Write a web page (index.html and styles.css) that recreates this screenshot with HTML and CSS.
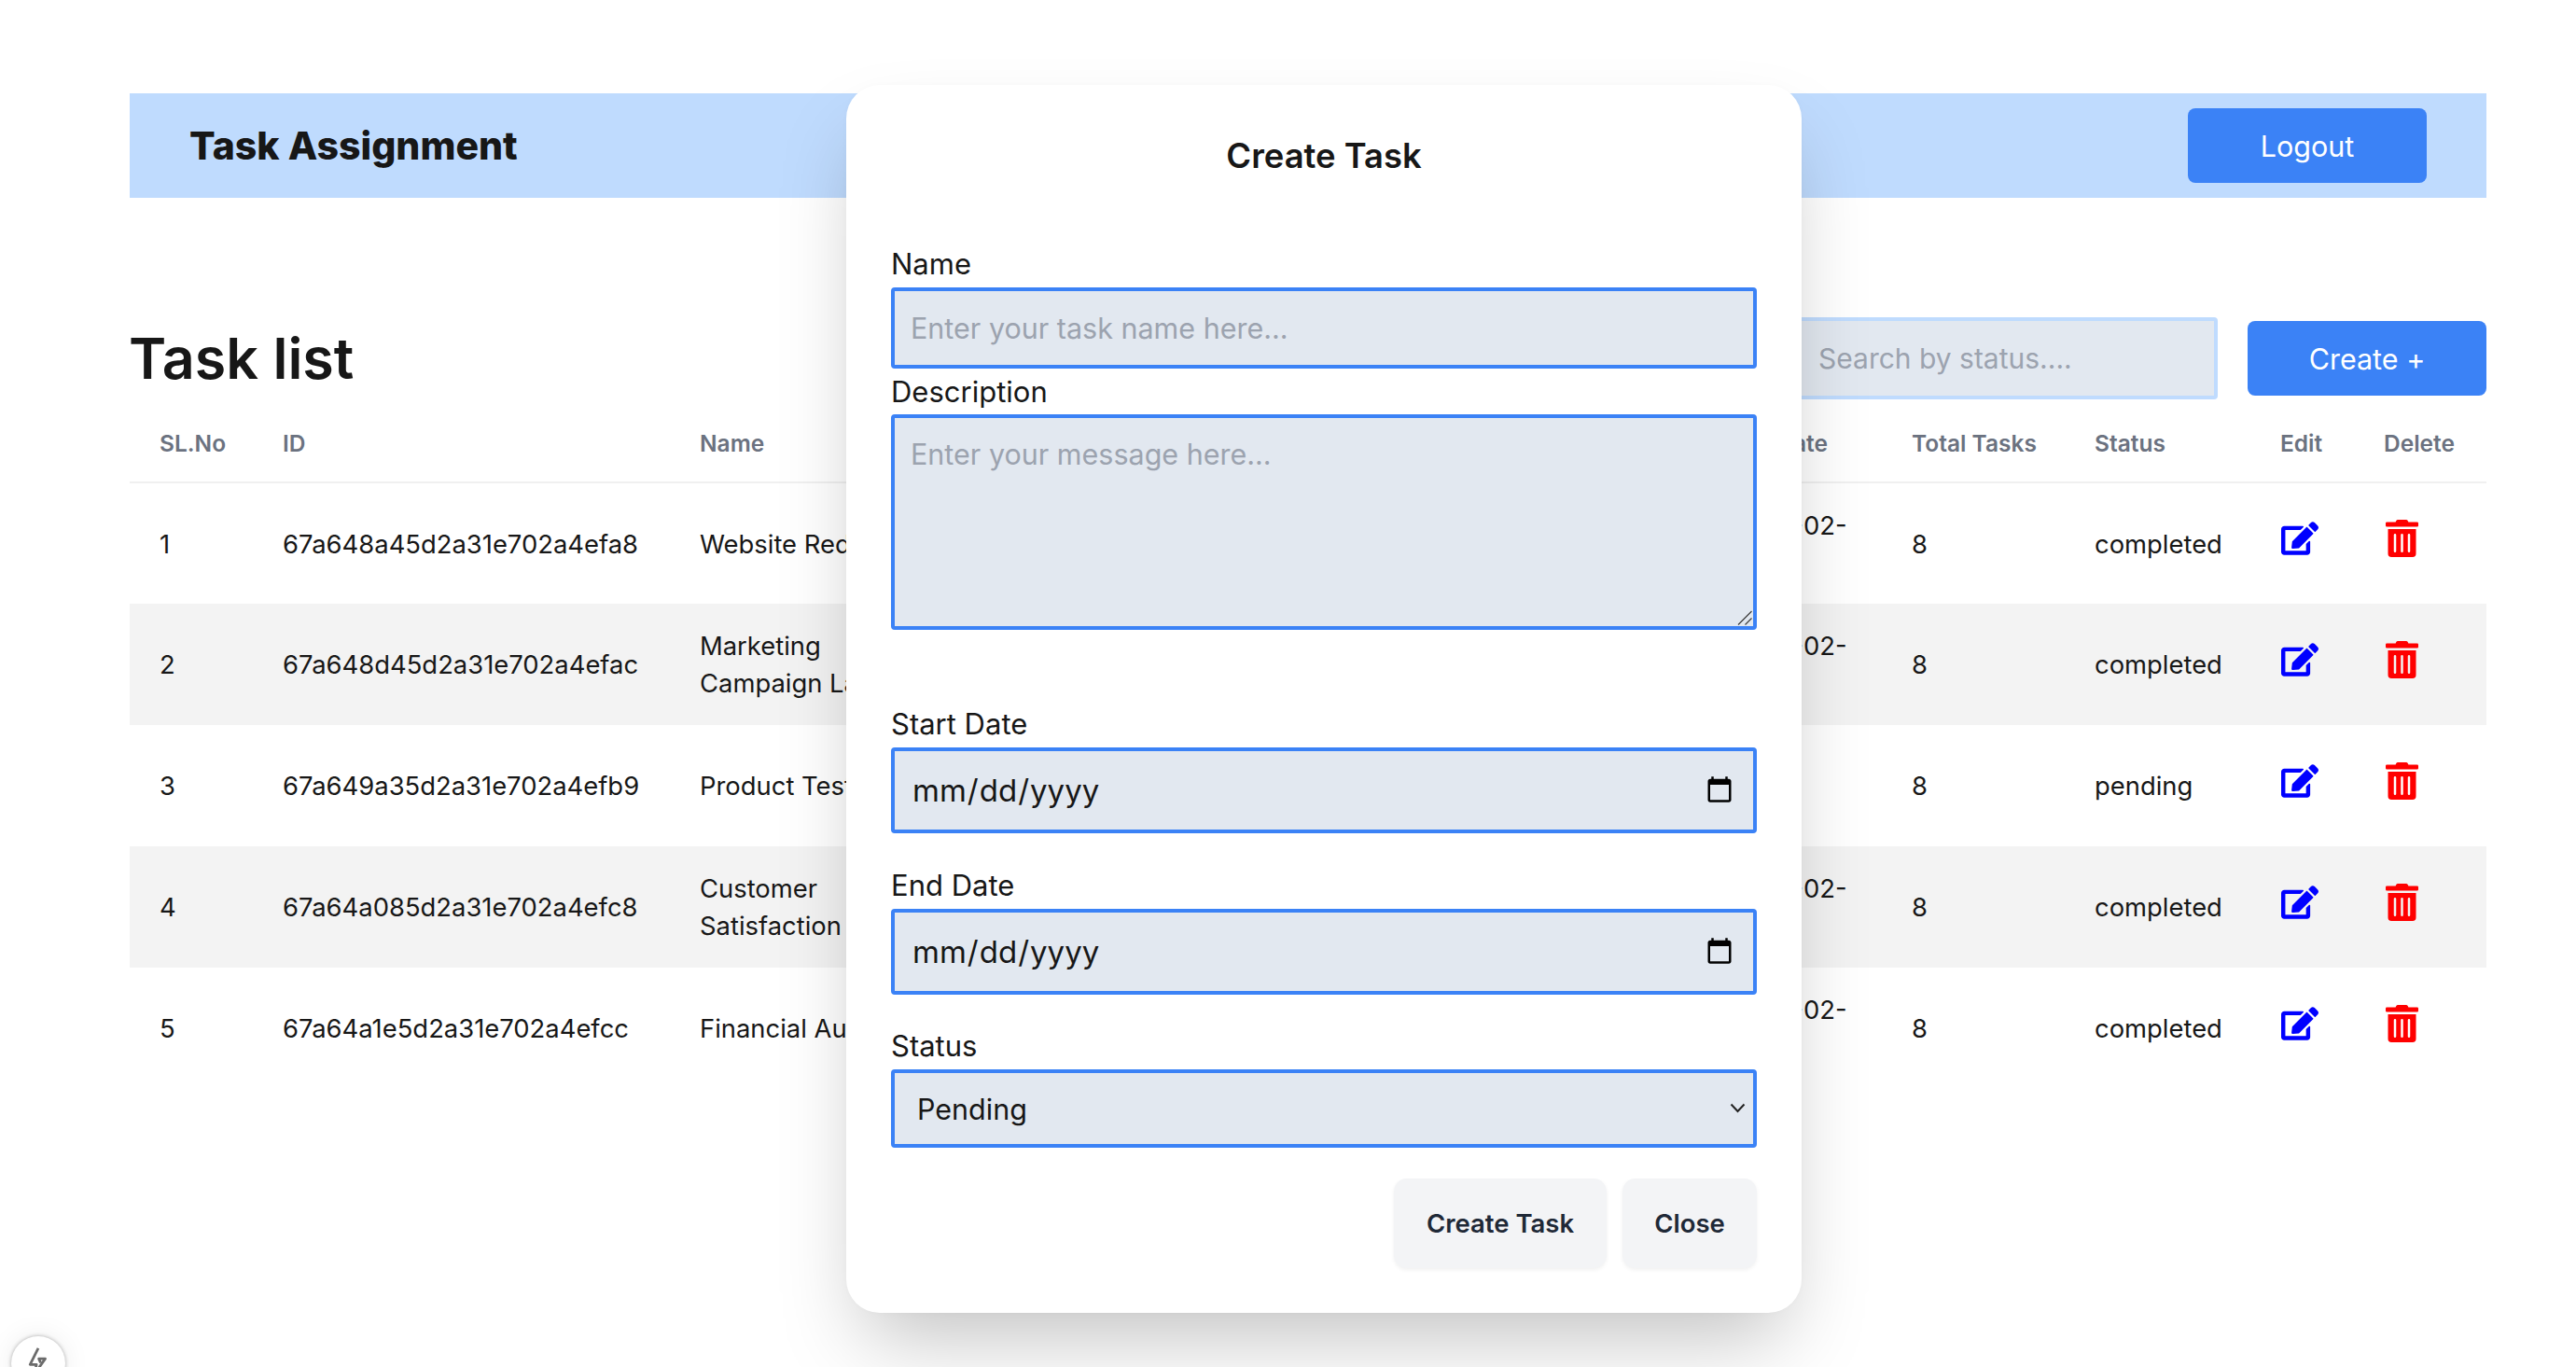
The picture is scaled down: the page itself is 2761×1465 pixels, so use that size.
FILE: index.html
```html
<!DOCTYPE html>
<html lang="en">
<head>
  <meta charset="utf-8">
  <title>Task Assignment</title>
  <link rel="stylesheet" href="styles.css">
</head>
<body>
  <section class="page">
    <header class="topbar">
      <h2 class="brand">Task Assignment</h2>
      <button class="btn-blue" type="button">Logout</button>
    </header>

    <div class="list-head">
      <h1 class="list-title">Task list</h1>
      <div class="list-tools">
        <input class="search" type="text" placeholder="Search by status....">
        <button class="btn-blue" type="button">Create +</button>
      </div>
    </div>

    <table class="tasks">
      <colgroup>
        <col class="c-sl"><col class="c-id"><col class="c-name"><col class="c-desc">
        <col class="c-start"><col class="c-end"><col class="c-total"><col class="c-status">
        <col class="c-edit"><col class="c-del">
      </colgroup>
      <thead>
        <tr>
          <th>SL.No</th><th>ID</th><th>Name</th><th>Description</th><th>Start Date</th>
          <th>End Date</th><th>Total Tasks</th><th>Status</th><th>Edit</th><th>Delete</th>
        </tr>
      </thead>
      <tbody>
        <tr>
          <td>1</td><td>67a648a45d2a31e702a4efa8</td><td>Website Redesign</td><td>Redesign the company website</td>
          <td>2025-02-01</td><td>2025-02-<br>20</td><td>8</td><td>completed</td>
          <td><svg class="ico-edit" viewBox="0 0 576 512"><use href="#edit"/></svg></td>
          <td><svg class="ico-del" viewBox="0 0 448 512"><use href="#trash"/></svg></td>
        </tr>
        <tr>
          <td>2</td><td>67a648d45d2a31e702a4efac</td><td>Marketing Campaign Launch</td><td>Plan the spring campaign</td>
          <td>2025-02-03</td><td>2025-02-<br>25</td><td>8</td><td>completed</td>
          <td><svg class="ico-edit" viewBox="0 0 576 512"><use href="#edit"/></svg></td>
          <td><svg class="ico-del" viewBox="0 0 448 512"><use href="#trash"/></svg></td>
        </tr>
        <tr>
          <td>3</td><td>67a649a35d2a31e702a4efb9</td><td>Product Testing</td><td>Test the new product</td>
          <td>2025-02-05</td><td>2025</td><td>8</td><td>pending</td>
          <td><svg class="ico-edit" viewBox="0 0 576 512"><use href="#edit"/></svg></td>
          <td><svg class="ico-del" viewBox="0 0 448 512"><use href="#trash"/></svg></td>
        </tr>
        <tr>
          <td>4</td><td>67a64a085d2a31e702a4efc8</td><td>Customer Satisfaction Survey</td><td>Collect customer feedback</td>
          <td>2025-02-07</td><td>2025-02-<br>22</td><td>8</td><td>completed</td>
          <td><svg class="ico-edit" viewBox="0 0 576 512"><use href="#edit"/></svg></td>
          <td><svg class="ico-del" viewBox="0 0 448 512"><use href="#trash"/></svg></td>
        </tr>
        <tr>
          <td>5</td><td>67a64a1e5d2a31e702a4efcc</td><td>Financial Audit</td><td>Review the yearly accounts</td>
          <td>2025-02-09</td><td>2025-02-<br>28</td><td>8</td><td>completed</td>
          <td><svg class="ico-edit" viewBox="0 0 576 512"><use href="#edit"/></svg></td>
          <td><svg class="ico-del" viewBox="0 0 448 512"><use href="#trash"/></svg></td>
        </tr>
      </tbody>
    </table>
  </section>

  <!-- modal sits over the page -->
  <section class="modal">
    <h3 class="modal-title">Create Task</h3>
    <form class="modal-form">
      <label class="lbl">Name</label>
      <input class="fld fld-name" type="text" placeholder="Enter your task name here...">
      <label class="lbl lbl-desc">Description</label>
      <div class="wrap">
        <textarea class="fld fld-desc" placeholder="Enter your message here..."></textarea>
        <svg class="grip" viewBox="0 0 16 16"><path d="M15.5 1 1 15.5M15.5 8.5 8.5 15.5" fill="none" stroke="#3d3d3d" stroke-width="1.2"/></svg>
      </div>
      <label class="lbl lbl-start">Start Date</label>
      <input class="fld fld-date" type="date">
      <label class="lbl lbl-end">End Date</label>
      <input class="fld fld-date" type="date">
      <label class="lbl lbl-status">Status</label>
      <div class="wrap">
        <select class="fld fld-select">
          <option>Pending</option>
          <option>Completed</option>
        </select>
        <svg class="chev" viewBox="0 0 17 11"><path d="M1.5 1.5 8.5 9l7-7.5" fill="none" stroke="#222" stroke-width="2"/></svg>
      </div>
      <div class="modal-actions">
        <button class="btn-gray btn-create" type="button">Create Task</button>
        <button class="btn-gray btn-close" type="button">Close</button>
      </div>
    </form>
  </section>

  <div class="bolt">
    <svg viewBox="0 0 24 24" width="30" height="30"><path d="M12 1.5 5 15.5h5.5L8.5 24l9.5-13.5h-5.5l1.5 3.5" fill="none" stroke="#6b6b6b" stroke-width="2.2" stroke-linejoin="round"/></svg>
  </div>

  <svg class="defs" width="0" height="0">
    <defs>
      <path id="edit" d="M402.6 83.2l90.2 90.2c3.8 3.8 3.8 10 0 13.8L274.4 405.6l-92.8 10.3c-12.4 1.4-22.9-9.1-21.5-21.5l10.3-92.8L388.8 83.2c3.8-3.8 10-3.8 13.8 0zm162-22.9l-48.8-48.8c-15.2-15.2-39.9-15.2-55.2 0l-35.4 35.4c-3.8 3.8-3.8 10 0 13.8l90.2 90.2c3.8 3.8 10 3.8 13.8 0l35.4-35.4c15.2-15.3 15.2-40 0-55.2zM384 346.2V448H64V128h229.8c3.2 0 6.2-1.3 8.5-3.5l40-40c7.6-7.6 2.2-20.5-8.5-20.5H48C21.5 64 0 85.5 0 112v352c0 26.5 21.5 48 48 48h352c26.5 0 48-21.5 48-48V306.2c0-10.7-12.9-16-20.5-8.5l-40 40c-2.2 2.3-3.5 5.3-3.5 8.5z"/>
      <path id="trash" d="M32 464a48 48 0 0 0 48 48h288a48 48 0 0 0 48-48V128H32zm272-256a16 16 0 0 1 32 0v224a16 16 0 0 1-32 0zm-96 0a16 16 0 0 1 32 0v224a16 16 0 0 1-32 0zm-96 0a16 16 0 0 1 32 0v224a16 16 0 0 1-32 0zM432 32H312l-9.4-18.7A24 24 0 0 0 281.1 0H166.8a23.72 23.72 0 0 0-21.4 13.3L136 32H16A16 16 0 0 0 0 48v32a16 16 0 0 0 16 16h416a16 16 0 0 0 16-16V48a16 16 0 0 0-16-16z"/>
    </defs>
  </svg>
</body>
</html>
```

FILE: styles.css
```css
* {
    box-sizing: border-box;
}

html, body {
    margin: 0;
    height: 100%;
    overflow: hidden;
}

body {
    font-family: Inter, "Liberation Sans", sans-serif;
    color: #171717;
    background: white;
}

/* page behind the modal */
.page {
    padding: 100px 96px 0 139px;
}

.topbar {
    display: flex;
    justify-content: space-between;
    align-items: center;
    height: 112px;
    padding: 0 64px;
    background: #bfdbfe;
}

.brand {
    margin: 0;
    font-size: 41px;
    font-weight: 800;
}

.btn-blue {
    width: 256px;
    height: 80px;
    border: 0;
    border-radius: 8px;
    background: #3b82f6;
    color: white;
    font: 400 30.5px Inter, sans-serif;
}

.list-head {
    display: flex;
    justify-content: space-between;
    align-items: center;
    margin-top: 128px;
    height: 88px;
}

.list-title {
    margin: 0 0 0 -1px;
    font-size: 61px;
    font-weight: 600;
}

.list-tools {
    display: flex;
    align-items: center;
    gap: 32px;
}

.search {
    width: 450px;
    height: 88px;
    padding: 0 0 0 18px;
    border: 4px solid #bfdbfe;
    border-radius: 4px;
    background: #e2e8f0;
    font: 400 30px Inter, sans-serif;
}

.search::placeholder,
.fld::placeholder {
    color: #9ca3af;
    opacity: 1;
}

/* table */
.tasks {
    width: 100%;
    border-collapse: collapse;
    table-layout: fixed;
    font-size: 27.4px;
    line-height: 40px;
}

.c-sl { width: 132px; }
.c-id { width: 447px; }
.c-name { width: 292px; }
.c-desc { width: 610px; }
.c-start { width: 201px; }
.c-end { width: 196px; }
.c-total { width: 196px; }
.c-status { width: 199px; }
.c-edit { width: 111px; }
.c-del { width: 142px; }

.tasks th {
    height: 89px;
    padding: 6px 0 0 32px;
    border-bottom: 2px solid #f0f0f0;
    text-align: left;
    font-size: 24.5px;
    font-weight: 600;
    color: #6b7280;
    white-space: nowrap;
}

.tasks td {
    height: 130px;
    padding: 0 0 0 32px;
    vertical-align: middle;
}

.tasks tbody tr:nth-child(even) {
    background: #f3f3f3;
}

.ico-edit {
    display: block;
    width: 40px;
    height: 36px;
    margin: 0 0 11px 1px;
    fill: #0000ff;
}

.ico-del {
    display: block;
    width: 35px;
    height: 40px;
    margin: 0 0 11px 2px;
    fill: #ff0000;
}

.defs {
    position: absolute;
}

/* modal */
.modal {
    position: absolute;
    left: 907px;
    top: 91px;
    width: 1024px;
    height: 1316px;
    padding: 54px 48px 48px;
    border-radius: 36px;
    background: white;
    box-shadow: 0 44px 88px -20px rgba(0, 0, 0, 0.25), 0 0 6px rgba(0, 0, 0, 0.02);
}

.modal-title {
    margin: 0 0 74px;
    height: 44px;
    line-height: 44px;
    text-align: center;
    font-size: 36.4px;
    font-weight: 600;
}

.modal-form {
    display: flex;
    flex-direction: column;
}

.lbl {
    height: 40px;
    line-height: 40px;
    margin-bottom: 5px;
    font-size: 31px;
}

.lbl-desc {
    margin-bottom: 4px;
}

.lbl-start {
    margin-top: 81px;
}

.lbl-end {
    margin-top: 36px;
}

.lbl-status {
    margin-top: 35px;
}

.fld {
    width: 100%;
    border: 4px solid #3b82f6;
    border-radius: 4px;
    background: #e2e8f0;
    color: #171717;
    font: 400 30.5px Inter, sans-serif;
    outline: none;
}

.fld-name {
    height: 87px;
    padding: 0 17px;
    margin-bottom: 5px;
}

.wrap {
    position: relative;
}

.fld-desc {
    display: block;
    height: 231px;
    padding: 20px 17px;
    resize: none;
}

.grip {
    position: absolute;
    right: 5px;
    bottom: 5px;
    width: 16px;
    height: 16px;
}

.fld-date {
    height: 92px;
    padding: 0 20px 0 18px;
    font-size: 33px;
}

.fld-date::-webkit-calendar-picker-indicator {
    width: 32px;
    height: 32px;
    margin: 0;
    padding: 0;
}

.fld-select {
    display: block;
    height: 84px;
    padding: 0 24px;
    appearance: none;
}

.chev {
    position: absolute;
    right: 12px;
    top: 36px;
    width: 17px;
    height: 11px;
    pointer-events: none;
}

.modal-actions {
    display: flex;
    justify-content: flex-end;
    gap: 17px;
    margin-top: 33px;
}

.btn-gray {
    height: 96px;
    border: 0;
    border-radius: 14px;
    background: #f3f4f6;
    color: #1f2937;
    font: 600 27.5px Inter, sans-serif;
    box-shadow: 0 2px 4px rgba(0, 0, 0, 0.06);
}

.btn-create { width: 228px; }
.btn-close { width: 144px; }

/* floating round button, cut by the window edge */
.bolt {
    position: absolute;
    left: 12px;
    top: 1432px;
    display: flex;
    justify-content: center;
    padding-top: 11px;
    width: 58px;
    height: 58px;
    border-radius: 50%;
    background: white;
    box-shadow: 0 0 4px rgba(0, 0, 0, 0.3), 0 0 30px rgba(0, 0, 0, 0.08);
}
```
